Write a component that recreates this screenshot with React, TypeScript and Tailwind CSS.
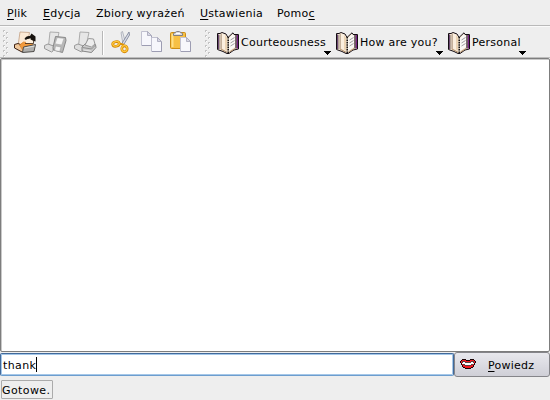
import type { ReactNode } from 'react';

function Label({ text, hot }: { text: string; hot?: number }) {
  if (hot === undefined) return <>{text}</>;
  return (
    <>
      {text.slice(0, hot)}
      <span className="underline decoration-1 underline-offset-2">{text[hot]}</span>
      {text.slice(hot + 1)}
    </>
  );
}

function Grip() {
  return (
    <svg width="8" height="28" viewBox="0 0 8 28" shapeRendering="crispEdges" className="shrink-0">
      {[0, 1, 2, 3, 4, 5].map((i) => (
        <g key={i}>
          <path d={`M0 ${i * 5 + 1}h2v1h-1v1h-1z`} fill="#c4c4c4" />
          <path d={`M1 ${i * 5 + 2}h1v1h-1z`} fill="#fff" />
          {i < 5 && <path d={`M3 ${i * 5 + 3}h2v1h-1v1h-1z`} fill="#c4c4c4" />}
          {i < 5 && <path d={`M4 ${i * 5 + 4}h1v1h-1z`} fill="#fff" />}
        </g>
      ))}
    </svg>
  );
}

function Icon({ children }: { children: ReactNode }) {
  return (
    <svg width="24" height="24" viewBox="0 0 24 24" className="shrink-0">
      {children}
    </svg>
  );
}

function OpenIcon() {
  return (
    <Icon>
      <path d="M6 1 15.5 1.5 13 15 4 15z" fill="#fbe9d5" stroke="#c3a083" strokeWidth=".8" />
      <path d="M.5 13.5 4 12.5l5 2 1 5.500-2 1-7.500-4z" fill="#efc79b" stroke="#3b2013" />
      <path d="M5.500 14 9.500 11 19 12.500l-1 3-9 4z" fill="#f29a3c" stroke="#d77d20" strokeWidth=".7" />
      <path d="M10.500 8Q12 4.500 16 5l1.500-2.500 4 3v5l-5.500-1.500 1-1.500Q14 7 12 9z" fill="#17130f" />
      <path d="M12 9Q14 7.500 16 8l3 2v3l-7-1z" fill="#fff0dc" />
      <path d="M11 12.500h8.500v-3" fill="none" stroke="#3a2415" strokeWidth=".8" />
      <path d="M9.500 16 21.500 13.500 20 20.500 8.500 21.500z" fill="#b0b0ae" stroke="#4f4d4b" />
      <path d="m10.500 17 10-2" stroke="#e2e2de" />
    </Icon>
  );
}

function SaveIcon() {
  return (
    <Icon>
      <path d="M6 1 15 1.500 12 15 4.500 15z" fill="#e6e6e6" stroke="#acacac" />
      <path d="M.5 14.500 4 13l5.500 2-.5 5-1.500 1-7-3.500z" fill="#dedede" stroke="#999" />
      <path d="M11.500 5.500 21.500 6.500l.5 3-3.500 12-9-2.500-.5-2.500z" fill="#b8b8b8" stroke="#888" />
      <path d="m13.500 7 6 .8-2 5.700-6-1z" fill="#f3f3f3" />
      <path d="m11.500 15 5.500 1-1.300 4.500-5-1z" fill="#f3f3f3" stroke="#999" strokeWidth=".5" />
    </Icon>
  );
}

function PrintIcon() {
  return (
    <Icon>
      <path d="M6 1 15 1.500 12 15 4.500 15z" fill="#e6e6e6" stroke="#acacac" />
      <path d="M.5 14.500 4 13l5.500 2-1 5-1 1-7-3.500z" fill="#dedede" stroke="#999" />
      <path d="m8 16 4.500-4.500 9 2 .5 3-4.500 5-9.500-1.500z" fill="#c9c9c9" stroke="#888" />
      <path d="M11 14 14.500 7.500l5 .5 1.500 5-3.500 3z" fill="#ededed" stroke="#999" />
      <path d="m8.500 16.500 9 1.500 4-4" fill="none" stroke="#8e8e8e" />
      <path d="m9.500 19 7.500 1" stroke="#e6e6e6" />
    </Icon>
  );
}

function CutIcon() {
  return (
    <Icon>
      <path d="M10 1.500 11.500 .5 14 10l-2 3z" fill="#e9eaee" stroke="#999eab" strokeWidth=".7" />
      <path d="M18 1 18.500 4l-6 10-2-1z" fill="#d9dce6" stroke="#757c92" strokeWidth=".8" />
      <ellipse cx="5" cy="13" rx="3.300" ry="2.300" fill="none" stroke="#d28300" strokeWidth="2.700" transform="rotate(-10 5 13)" />
      <ellipse cx="13.500" cy="17.800" rx="2.700" ry="3" fill="none" stroke="#d28300" strokeWidth="2.700" />
      <path d="m8 12.500 4 1v2" fill="none" stroke="#dc9109" strokeWidth="2" />
      <ellipse cx="5" cy="12.800" rx="3.300" ry="2.300" fill="none" stroke="#ffc93d" strokeWidth="1.300" transform="rotate(-10 5 13)" />
      <ellipse cx="13.400" cy="17.600" rx="2.700" ry="3" fill="none" stroke="#ffc93d" strokeWidth="1.300" />
    </Icon>
  );
}

function Page({ x, y }: { x: number; y: number }) {
  return (
    <g transform={`translate(${x} ${y})`}>
      <path d="M.5.5h6l4 4v10H.5z" fill="#f7f7fc" stroke="#c1c1d0" />
      <path d="M6.500.5v4h4z" fill="#d8d8e6" stroke="#a4a4b8" strokeWidth=".8" />
      <path d="M1 14.500h9.500V5" fill="none" stroke="#9494aa" strokeWidth=".8" />
    </g>
  );
}

function CopyIcon() {
  return <Icon><Page x={1} y={0} /><Page x={11} y={6} /></Icon>;
}

function PasteIcon() {
  return (
    <Icon>
      <rect x="1.500" y="1.500" width="15" height="16" rx="1" fill="#f7c044" stroke="#cc8d15" />
      <path d="M3.500 3v13" stroke="#ffe087" strokeWidth="2" />
      <path d="M4.500 4.500V2.500L7 1q0-.5 2-.5t2 .5l2.500 1.500v2z" fill="#dcdce2" stroke="#777780" strokeWidth=".9" />
      <path d="M7 2.500h4" stroke="#fff" />
      <Page x={11} y={6} />
    </Icon>
  );
}

function BookIcon() {
  return (
    <svg width="22" height="22" viewBox="0 0 22 22" className="shrink-0">
      <path d="M.5 1.500 3 1.500 5 .5 9 2l2 3.500L16 .8l1 1.700h4.500v14.500L17 18l-5 3.500H10L6 19.500.5 17.500z" fill="#f0e3d2" stroke="#140d13" strokeLinejoin="round" />
      <path d="M1.500 2.500v14.500" stroke="#6d4a73" />
      <path d="M2.700 3v14" stroke="#ac9c90" strokeWidth="1.200" />
      <path d="M20.400 3v13.500" stroke="#7c2386" strokeWidth="1.200" />
      <path d="M19 3v13.500" stroke="#2c1a2a" strokeWidth="1.200" />
      <path d="m3.500 2.500 1.500-1v15l-1.500 1z" fill="#c4b09b" />
      <path d="m5 1.500 3.500 1.200 2 3.300v13.500L8 18l-3-1.500z" fill="#fbefdf" />
      <path d="M8 3 10.300 6v13l-2.300-1.500z" fill="#ecd4b4" />
      <path d="m12 6.500 4-4.500.5 1.500H18V15l-6 4z" fill="#fbf9f5" />
      <path d="m4 17 6 3.300M12.500 20 18 16.500" stroke="#b38f69" />
      <path d="M11.200 5v16" stroke="#0e0b0c" strokeWidth="1.500" strokeDasharray="1.600 .8" />
      <path d="m13.500 8 4-2.500M13.500 11l4-2.500M13.500 14l4-2.500" stroke="#85838a" strokeWidth=".8" />
    </svg>
  );
}

function Lips() {
  return (
    <svg width="16" height="11" viewBox="0 0 16 11" shapeRendering="crispEdges" className="shrink-0">
      <path d="M2 0h4v1h4V0h4v1h1v1h1v2h-1v2h-1v2h-1v1h-2v1H5V9H3V8H2V6H1V4H0V2h1V1h1z" fill="#190405" />
      <path d="M2 1h4v1h4V1h4v1h1v2h-1v2h-1v2h-2v1H5V8H3V6H2V4H1V2h1z" fill="#f31820" />
      <path d="M2 2h3v1h6V2h3v3h-1v1h-2v1H5V6H3V5H2z" fill="#5a4545" />
      <path d="M3 3h2v1h6V3h2v1h1v1h-3v1H5V5H2V4h1z" fill="#fff" />
    </svg>
  );
}

function BookButton({ text, className }: { text: string; className: string }) {
  return (
    <div className={`relative flex h-[30px] shrink-0 items-center ${className}`}>
      <BookIcon />
      <span className="ml-[2px] whitespace-pre">{text}</span>
      <svg width="7" height="4" viewBox="0 0 7 4" shapeRendering="crispEdges" className="absolute right-0 bottom-[3px]">
        <path d="M0 0h7v1H6v1H5v1H4v1H3V3H2V2H1V1H0z" fill="#000" />
      </svg>
    </div>
  );
}

export default function App() {
  return (
    <div className="flex h-[400px] w-[550px] flex-col overflow-hidden bg-[#eeeeee] font-['DejaVu_Sans',sans-serif] text-[11px] leading-[14px] tracking-[0.25px] text-black">
      <nav className="flex h-[26px] shrink-0 items-center border-b border-[#b9b9b9] pt-[2px] pl-[7px] whitespace-pre">
        <span className="w-9"><Label text="Plik" hot={0} /></span>
        <span className="w-[53px]"><Label text="Edycja" hot={0} /></span>
        <span className="w-[104px]"><Label text="Zbiory wyrażeń" hot={5} /></span>
        <span className="w-[77px]"><Label text="Ustawienia" hot={0} /></span>
        <span><Label text="Pomoc" hot={4} /></span>
      </nav>
      <div className="flex h-8 shrink-0 items-center border-t border-b border-t-[#fafafa] border-b-[#bdbdbd] pt-[2px] pl-[3px]">
        <Grip />
        <div className="flex w-[194px] items-center pl-[3px]">
          <div className="flex w-[85px] gap-[6px]"><OpenIcon /><SaveIcon /><PrintIcon /></div>
          <div className="ml-[3px] h-6 w-[2px] shrink-0 border-l border-[#b7b7b7] bg-white" />
          <div className="ml-[7px] flex gap-[5px]"><CutIcon /><CopyIcon /><PasteIcon /></div>
        </div>
        <Grip />
        <BookButton text="Courteousness" className="ml-1 w-[114px]" />
        <BookButton text="How are you?" className="ml-[5px] w-[107px]" />
        <BookButton text="Personal" className="ml-[5px] w-[78px]" />
      </div>
      <main className="h-[294px] shrink-0 rounded-[2px] border border-[#7d7d7d] bg-white shadow-[inset_1px_1px_0_#c9c9c9]" />
      <div className="flex h-[26px] shrink-0">
        <div className="mt-[1px] flex h-[23px] w-[454px] items-center rounded-[2px] border border-[#416a9c] border-b-[#6c9dce] bg-white pl-[2px] shadow-[inset_0_0_0_1px_#a5c7e8]">
          <span className="pt-[2px] tracking-[0.4px]">thank</span><span className="h-[15px] w-px bg-black" />
        </div>
        <button className="flex h-[25px] w-24 items-center rounded-[3px] border border-[#85858a] bg-linear-to-b from-[#e8e8ed] to-[#cfcfd7] pl-[5px]">
          <Lips />
          <span className="ml-3 pt-[2px]"><Label text="Powiedz" hot={0} /></span>
        </button>
      </div>
      <footer className="flex h-[22px] shrink-0 items-start pt-[2px] pl-[1px]">
        <div className="flex h-[19px] w-[52px] items-center rounded-[1px] border border-[#ababab] pt-[2px] tracking-[0.4px]">Gotowe.</div>
      </footer>
    </div>
  );
}
